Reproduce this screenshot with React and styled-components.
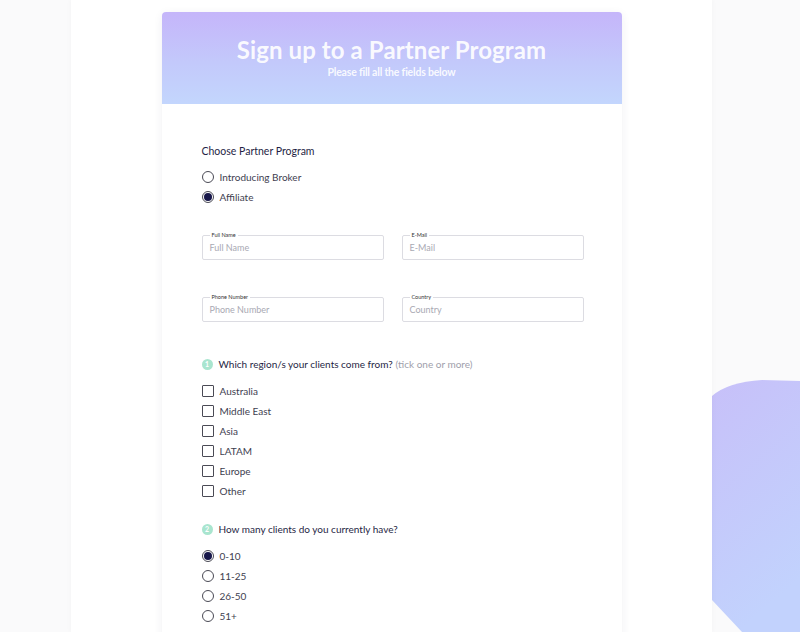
import React from 'react';
import styled, { createGlobalStyle } from 'styled-components';

const GlobalStyle = createGlobalStyle`
  html, body {
    margin: 0;
    padding: 0;
    background: #fafafb;
    font-family: Lato, "Open Sans", Arial, sans-serif;
    overflow: hidden;
  }
`;

const Page = styled.div`
  position: relative;
  width: 800px;
  height: 632px;
  overflow: hidden;
`;

const Blob = styled.svg`
  position: absolute;
  left: 712px;
  top: 380px;
  z-index: 0;
`;

const Column = styled.div`
  position: relative;
  z-index: 1;
  margin-left: 71px;
  width: 641px;
  height: 632px;
  background: #ffffff;
  box-shadow: 0 0 6px rgba(0, 0, 0, 0.035);
  padding-top: 12px;
  box-sizing: border-box;
`;

const Card = styled.div`
  width: 460px;
  margin: 0 auto;
  background: #ffffff;
  border-radius: 4px 4px 0 0;
  box-shadow: 0 2px 10px rgba(40, 40, 90, 0.07);
  min-height: 640px;
`;

const Header = styled.div`
  height: 92px;
  border-radius: 4px 4px 0 0;
  background: linear-gradient(180deg, #c5b5fa 0%, #c3c9fb 55%, #c3d6fd 100%);
  display: flex;
  flex-direction: column;
  align-items: center;
  justify-content: center;
  color: #ffffff;
  padding-bottom: 2px;
  box-sizing: border-box;
`;

const Title = styled.h1`
  margin: 0;
  font-size: 24px;
  font-weight: 700;
  line-height: 30px;
  letter-spacing: 0.1px;
  color: rgba(255, 255, 255, 0.92);
`;

const Subtitle = styled.p`
  margin: 0;
  font-size: 10.5px;
  font-weight: 700;
  line-height: 14px;
  letter-spacing: -0.2px;
  color: rgba(255, 255, 255, 0.9);
`;

const Body = styled.div`
  padding: 40px 40px 0;
  display: flex;
  flex-direction: column;
`;

const GroupLabel = styled.div`
  font-size: 10.5px;
  color: #1f1f45;
  line-height: 14px;
  margin-bottom: 12px;
`;

const OptionList = styled.div`
  display: flex;
  flex-direction: column;
  gap: 6px;
`;

const Option = styled.label`
  display: flex;
  align-items: center;
  gap: 6px;
  font-size: 10px;
  color: #3e3e50;
  height: 14px;
`;

const Radio = styled.span`
  width: 10px;
  height: 10px;
  border-radius: 50%;
  border: 1px solid #4a4a55;
  display: flex;
  align-items: center;
  justify-content: center;
  box-sizing: content-box;
  &::after {
    content: '';
    width: 8px;
    height: 8px;
    border-radius: 50%;
    background: ${({ checked }) => (checked ? '#17174a' : 'transparent')};
  }
`;

const Box = styled.span`
  width: 10px;
  height: 10px;
  border: 1px solid #4a4a55;
  border-radius: 1px;
  box-sizing: content-box;
`;

const FieldGrid = styled.div`
  display: grid;
  grid-template-columns: 182px 182px;
  column-gap: 18px;
  row-gap: 34px;
  margin-top: 28px;
`;

const Field = styled.fieldset`
  margin: 0;
  padding: 0 7px;
  height: 28px;
  border: 1px solid #dcdce2;
  border-radius: 2px;
  box-sizing: border-box;
  display: flex;
  align-items: center;
`;

const Legend = styled.legend`
  font-size: 5.5px;
  color: #333;
  padding: 0 2px;
  margin-left: 0;
  line-height: 6px;
`;

const Placeholder = styled.span`
  font-size: 9px;
  color: #a9a9b3;
  margin-top: -3px;
`;

const Question = styled.div`
  display: flex;
  align-items: center;
  gap: 6px;
  font-size: 10px;
  color: #1f1f45;
  line-height: 14px;
  margin-top: ${({ top }) => top}px;
  margin-bottom: 13px;
`;

const Step = styled.span`
  width: 11px;
  height: 11px;
  border-radius: 50%;
  background: #a9e5cf;
  color: #ffffff;
  font-size: 7px;
  font-weight: 700;
  display: flex;
  align-items: center;
  justify-content: center;
`;

const Hint = styled.span`
  color: #a0a0ab;
  margin-left: 3px;
`;

const fields = ['Full Name', 'E-Mail', 'Phone Number', 'Country'];
const regions = ['Australia', 'Middle East', 'Asia', 'LATAM', 'Europe', 'Other'];
const counts = ['0-10', '11-25', '26-50', '51+'];

export default function App() {
  return (
    <Page>
      <GlobalStyle />
      <Blob width="88" height="252" viewBox="0 0 88 252">
        <defs>
          <linearGradient id="blobFill" x1="0" y1="0" x2="0.3" y2="1">
            <stop offset="0%" stopColor="#c7c0f9" />
            <stop offset="100%" stopColor="#c2d2fd" />
          </linearGradient>
        </defs>
        <path d="M0 16 Q16 2 50 0 L88 1 L88 252 L30 252 L0 220 Z" fill="url(#blobFill)" />
      </Blob>
      <Column>
        <Card>
          <Header>
            <Title>Sign up to a Partner Program</Title>
            <Subtitle>Please fill all the fields below</Subtitle>
          </Header>
          <Body>
            <GroupLabel>Choose Partner Program</GroupLabel>
            <OptionList>
              <Option><Radio />Introducing Broker</Option>
              <Option><Radio checked />Affiliate</Option>
            </OptionList>

            <FieldGrid>
              {fields.map((f) => (
                <Field key={f}>
                  <Legend>{f}</Legend>
                  <Placeholder>{f}</Placeholder>
                </Field>
              ))}
            </FieldGrid>

            <Question top={35}>
              <Step>1</Step>
              <span>
                Which region/s your clients come from?<Hint>(tick one or more)</Hint>
              </span>
            </Question>
            <OptionList>
              {regions.map((r) => (
                <Option key={r}><Box />{r}</Option>
              ))}
            </OptionList>

            <Question top={24}>
              <Step>2</Step>
              <span>How many clients do you currently have?</span>
            </Question>
            <OptionList>
              {counts.map((c, i) => (
                <Option key={c}><Radio checked={i === 0} />{c}</Option>
              ))}
            </OptionList>
          </Body>
        </Card>
      </Column>
    </Page>
  );
}
